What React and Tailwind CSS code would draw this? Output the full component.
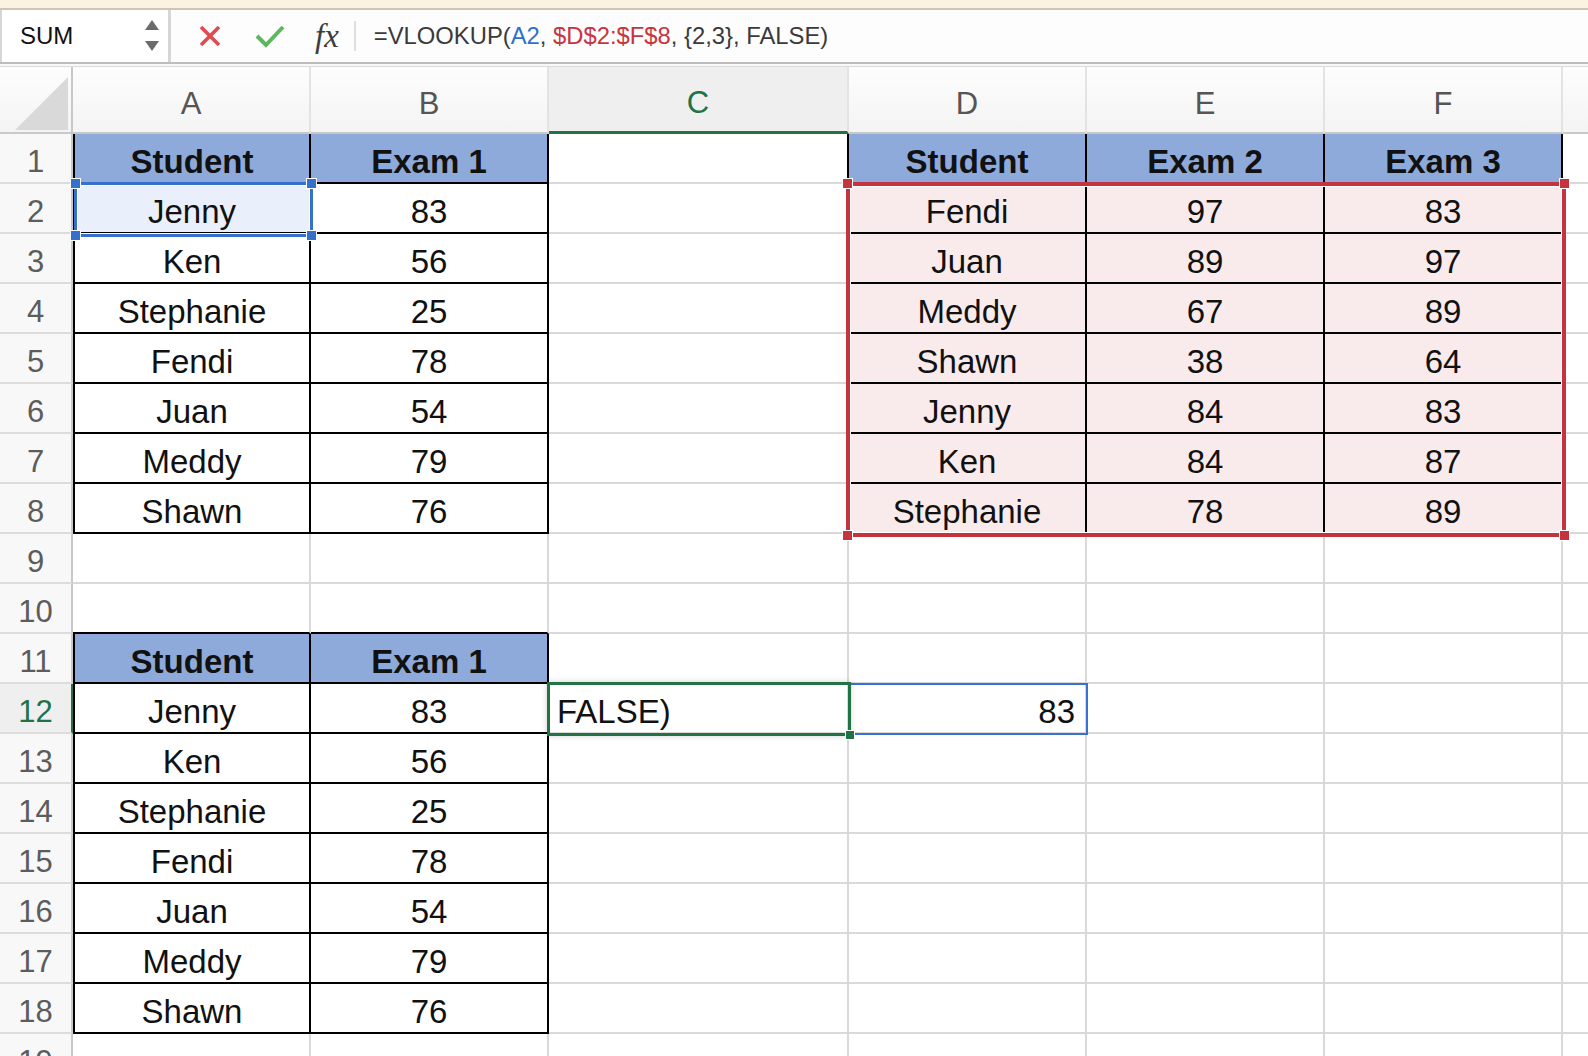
import React from 'react';
import clsx from 'clsx';

const names = ['Jenny', 'Ken', 'Stephanie', 'Fendi', 'Juan', 'Meddy', 'Shawn'];
const exam1 = [83, 56, 25, 78, 54, 79, 76];
const lookup = [
    ['Fendi', 97, 83],
    ['Juan', 89, 97],
    ['Meddy', 67, 89],
    ['Shawn', 38, 64],
    ['Jenny', 84, 83],
    ['Ken', 84, 87],
    ['Stephanie', 78, 89],
];

const columns = ['A', 'B', 'C', 'D', 'E', 'F', ''];
const rows = Array.from({ length: 19 }, (_, i) => i + 1);

// text of a cell, or null
const valueOf = (r, c) => {
    if (r === 1) return ['Student', 'Exam 1', null, 'Student', 'Exam 2', 'Exam 3', null][c];
    if (r === 11) return ['Student', 'Exam 1'][c] ?? null;
    if (r >= 2 && r <= 8) {
        if (c === 0) return names[r - 2];
        if (c === 1) return exam1[r - 2];
        if (c >= 3 && c <= 5) return lookup[r - 2][c - 3];
    }
    if (r >= 12 && r <= 18) {
        if (c === 0) return names[r - 12];
        if (c === 1) return exam1[r - 12];
    }
    if (r === 12 && c === 2) return 'FALSE)';
    if (r === 12 && c === 3) return 83;
    return null;
};

const gridCols = 'grid grid-cols-[73px_238px_238px_300px_238px_238px_238px_1fr]';

const Cell = ({ r, c }) => {
    const inT1 = r >= 1 && r <= 8 && c <= 1;
    const inT2 = r >= 1 && r <= 8 && c >= 3 && c <= 5;
    const inT3 = r >= 11 && r <= 18 && c <= 1;
    const inT = inT1 || inT2 || inT3;
    const head = inT && (r === 1 || r === 11);
    const rightDark = inT || (c === 2 && r <= 8);
    const bottomDark = inT || (r === 10 && c <= 1);
    const leftDark = (inT1 || inT3) && c === 0;

    let bg = 'bg-white';
    if (head) bg = 'bg-[#8eaadb]';
    else if (inT2) bg = 'bg-[#f9ebeb]';
    else if (r === 2 && c === 0) bg = 'bg-[#eaf0fb]';

    let align = 'justify-center';
    if (r === 12 && c === 2) align = 'justify-start pl-[8px]';
    if (r === 12 && c === 3) align = 'justify-end pr-[10px]';

    const value = valueOf(r, c);

    return (
        <div
            className={clsx(
                'flex h-[50px] items-center overflow-hidden whitespace-nowrap border-b-2 pt-2 text-[33px] text-[#111]',
                c === 6 ? 'border-r-0' : 'border-r-2',
                rightDark ? 'border-r-black' : 'border-r-[#d9d9d9]',
                bottomDark ? 'border-b-black' : 'border-b-[#d9d9d9]',
                leftDark && 'border-l-2 border-l-black',
                head && 'font-bold',
                bg,
                align
            )}
        >
            {value}
        </div>
    );
};

const Handle = ({ className }) => (
    <div className={clsx('absolute h-[11px] w-[11px] border border-white', className)} />
);

const FormulaBar = () => (
    <div className="flex h-[52px] items-stretch bg-[#fdfdfd]">
        <div className="flex w-[171px] items-center justify-between border-l-2 border-r-[3px] border-[#d6d6d6] bg-white pl-[18px] pr-[9px]">
            <span className="text-[24px] text-[#111]">SUM</span>
            <svg width="14" height="34" viewBox="0 0 14 34">
                <polygon points="0,11 7,1 14,11" fill="#6b6b6b" />
                <polygon points="0,22 14,22 7,32" fill="#6b6b6b" />
            </svg>
        </div>
        <div className="flex items-center">
            <svg className="ml-[27px]" width="24" height="24" viewBox="0 0 24 24">
                <path d="M3 3 L21 21 M21 3 L3 21" stroke="#e14a50" strokeWidth="3.6" fill="none" />
            </svg>
            <svg className="ml-[33px]" width="30" height="24" viewBox="0 0 30 24">
                <polyline points="2,12 11,21 28,3" stroke="#5cb85c" strokeWidth="4" fill="none" />
            </svg>
            <span className="ml-[30px] font-['Liberation_Serif',serif] text-[33px] italic leading-none text-[#3d3d3d]">fx</span>
            <div className="ml-[15px] h-[30px] w-[2px] bg-[#dedede]" />
            <div className="ml-[18px] whitespace-nowrap text-[23.8px] text-[#3a3a3a]">
                =VLOOKUP(<span className="text-[#2f6fd0]">A2</span>, <span className="text-[#c8343f]">$D$2:$F$8</span>, {'{2,3}'}, FALSE)
            </div>
        </div>
    </div>
);

const ColumnHeaders = () => (
    <div className={clsx(gridCols, 'h-[67px]')}>
        <div className="flex items-end justify-end border-r-2 border-b-2 border-r-[#c8c8c8] border-b-[#c9c9c9] bg-linear-to-b from-[#fdfdfd] to-[#f4f4f4] pb-[2px] pr-[3px]">
            <svg width="53" height="53" viewBox="0 0 53 53">
                <polygon points="0,53 53,0 53,53" fill="#d9d9d9" />
            </svg>
        </div>
        {columns.map((letter, i) => (
            <div
                key={i}
                className={clsx(
                    'flex items-center justify-center pt-[9px] text-[31px]',
                    i === 6 ? 'border-r-0' : 'border-r-2 border-r-[#e3e3e3]',
                    i === 2
                        ? 'border-b-[3px] border-b-[#217346] bg-[#efefef] text-[#217346]'
                        : 'border-b-2 border-b-[#c9c9c9] bg-linear-to-b from-[#fdfdfd] to-[#f4f4f4] text-[#555]'
                )}
            >
                {letter}
            </div>
        ))}
    </div>
);

const App = () => {
    return (
        <div className="h-[1056px] w-[1588px] overflow-hidden bg-white font-['Liberation_Sans',Arial,sans-serif]">
            <div className="h-[10px] border-b-2 border-[#cbc6b8] bg-[#fbf3df]" />
            <FormulaBar />
            <div className="h-[5px] border-t-2 border-b border-t-[#bdbdbd] border-b-[#dadada] bg-[#f9f9f9]" />
            <ColumnHeaders />

            <div className="relative">
                {rows.map((r) => (
                    <div key={r} className={gridCols}>
                        <div
                            className={clsx(
                                'flex h-[50px] items-center justify-center border-r-2 border-b-2 border-b-[#dcdcdc] pt-2 text-[31px]',
                                r === 12
                                    ? 'border-r-[#217346] bg-[#efefef] text-[#217346]'
                                    : 'border-r-[#c8c8c8] bg-[#f8f8f8] text-[#5c5c5c]'
                            )}
                        >
                            {r}
                        </div>
                        {columns.map((_, c) => (
                            <Cell key={c} r={r} c={c} />
                        ))}
                    </div>
                ))}

                {/* A2 selection */}
                <div className="pointer-events-none absolute left-[74px] top-[48px] h-[55px] w-[239px] border-[3px] border-[#3570cc] shadow-[inset_0_0_0_1px_#fff]">
                    <Handle className="-left-[7px] -top-[7px] bg-[#3570cc]" />
                    <Handle className="-right-[7px] -top-[7px] bg-[#3570cc]" />
                    <Handle className="-bottom-[7px] -left-[7px] bg-[#3570cc]" />
                    <Handle className="-bottom-[7px] -right-[7px] bg-[#3570cc]" />
                </div>

                {/* $D$2:$F$8 range */}
                <div className="pointer-events-none absolute left-[846px] top-[48px] h-[355px] w-[720px] border-[4px] border-[#c3343f] shadow-[inset_0_0_0_1px_#fff]">
                    <Handle className="-left-[8px] -top-[8px] bg-[#c3343f]" />
                    <Handle className="-right-[8px] -top-[8px] bg-[#c3343f]" />
                    <Handle className="-bottom-[8px] -left-[8px] bg-[#c3343f]" />
                    <Handle className="-bottom-[8px] -right-[8px] bg-[#c3343f]" />
                </div>

                {/* D12 result outline */}
                <div className="pointer-events-none absolute left-[849px] top-[549px] h-[52px] w-[239px] border-2 border-[#3a70d0]" />

                {/* C12 active cell */}
                <div className="pointer-events-none absolute left-[547px] top-[548px] h-[54px] w-[304px] border-[3px] border-[#217346] shadow-[0_0_6px_rgba(0,0,0,0.18)]">
                    <div className="absolute -bottom-[7px] -right-[7px] h-[10px] w-[10px] border border-white bg-[#217346]" />
                </div>
            </div>
        </div>
    );
};

export default App;
